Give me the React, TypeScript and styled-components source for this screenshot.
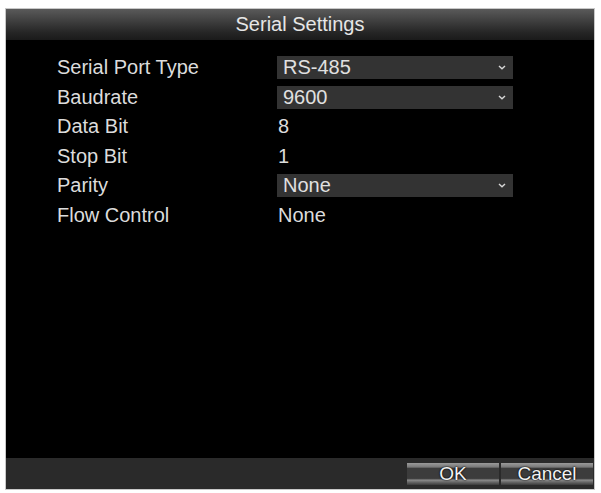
import * as React from "react";
import styled, { createGlobalStyle } from "styled-components";

const GlobalStyle = createGlobalStyle`
  html, body {
    margin: 0;
    padding: 0;
    background: #ffffff;
  }
  body {
    font-family: "Liberation Sans", Arial, sans-serif;
  }
`;

const Page = styled.div`
  width: 601px;
  height: 493px;
  padding: 8px 0 0 5px;
  box-sizing: border-box;
`;

const Panel = styled.div`
  width: 590px;
  height: 482px;
  display: flex;
  flex-direction: column;
  background: #000;
  border: 1px solid #c8c8c8;
  box-sizing: border-box;
`;

const TitleBar = styled.div`
  height: 31px;
  display: flex;
  align-items: center;
  justify-content: center;
  background: linear-gradient(#5a5a5a 0%, #3e3e3e 40%, #262626 75%, #1a1a1a 100%);
  color: #e6e6e6;
  font-size: 20px;
`;

const Content = styled.div`
  flex: 1;
  padding: 13px 0 0 51px;
`;

const Form = styled.div`
  display: grid;
  grid-template-columns: 220px 236px;
  grid-auto-rows: 29.5px;
  align-items: center;
`;

const Label = styled.div`
  color: #dcdcdc;
  font-size: 20px;
`;

const Value = styled.div`
  color: #dcdcdc;
  font-size: 20px;
  padding-left: 1px;
`;

const Select = styled.div`
  height: 23px;
  display: flex;
  align-items: center;
  justify-content: space-between;
  padding: 0 7px 0 6px;
  background: #333333;
  color: #e0e0e0;
  font-size: 20px;
`;

const Footer = styled.div`
  height: 31px;
  display: flex;
  align-items: center;
  justify-content: flex-end;
  gap: 2px;
  padding-right: 1px;
  background: #2a2a2a;
`;

const Button = styled.div<{ $w: number }>`
  width: ${(p) => p.$w}px;
  height: 22px;
  display: flex;
  align-items: center;
  justify-content: center;
  background: linear-gradient(
    #9a9a9a 0%,
    #7a7a7a 18%,
    #3c3c3c 25%,
    #3c3c3c 70%,
    #8a8a8a 78%,
    #6a6a6a 86%,
    #3a3a3a 100%
  );
  color: #f2f2f2;
  font-size: 19px;
  text-shadow: 0 0 2px #000, 0 0 1px #000;
`;

const Chevron = () => (
  <svg width="8" height="5" viewBox="0 0 8 5">
    <path d="M1 1 L4 3.8 L7 1" stroke="#d8d8d8" strokeWidth="1.4" fill="none" />
  </svg>
);

const rows: { label: string; value: string; select?: boolean }[] = [
  { label: "Serial Port Type", value: "RS-485", select: true },
  { label: "Baudrate", value: "9600", select: true },
  { label: "Data Bit", value: "8" },
  { label: "Stop Bit", value: "1" },
  { label: "Parity", value: "None", select: true },
  { label: "Flow Control", value: "None" },
];

const App = () => (
  <Page>
    <GlobalStyle />
    <Panel>
      <TitleBar>Serial Settings</TitleBar>
      <Content>
        <Form>
          {rows.map((r) => (
            <React.Fragment key={r.label}>
              <Label>{r.label}</Label>
              {r.select ? (
                <Select>
                  <span>{r.value}</span>
                  <Chevron />
                </Select>
              ) : (
                <Value>{r.value}</Value>
              )}
            </React.Fragment>
          ))}
        </Form>
      </Content>
      <Footer>
        <Button $w={92}>OK</Button>
        <Button $w={92}>Cancel</Button>
      </Footer>
    </Panel>
  </Page>
);

export default App;
